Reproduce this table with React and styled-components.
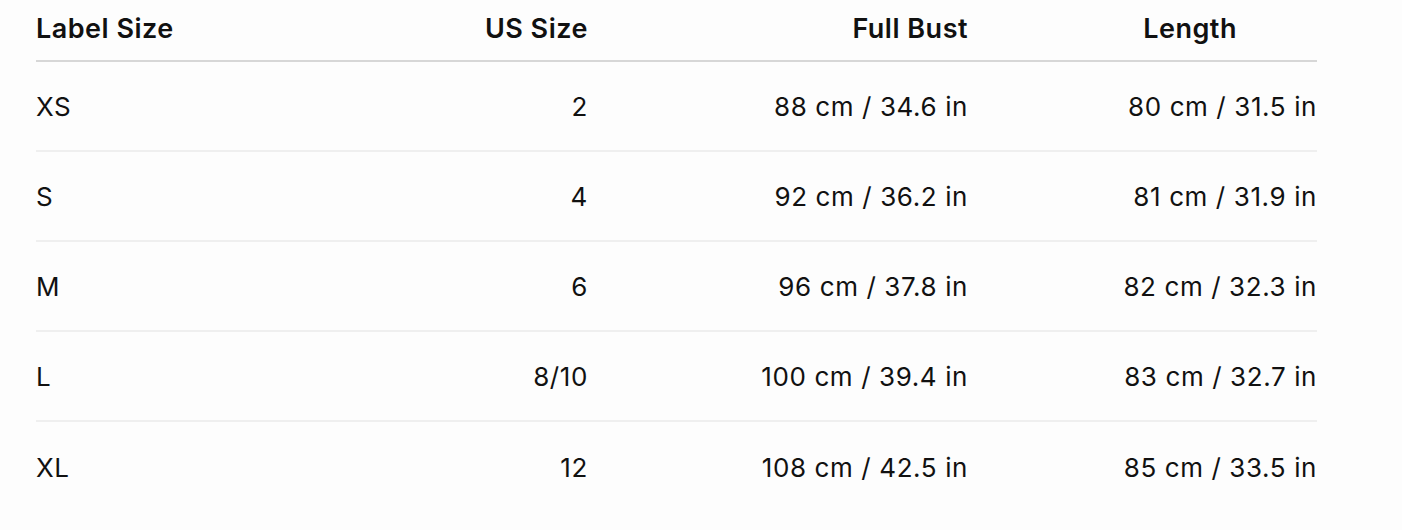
import React from 'react';
import styled, { createGlobalStyle } from 'styled-components';

const GlobalStyle = createGlobalStyle`
  html, body {
    margin: 0;
    padding: 0;
    background: #fdfdfd;
  }
  body {
    font-family: Inter, "Noto Sans", sans-serif;
    color: #111;
  }
`;

const Page = styled.div`
  padding: 0 86px 0 36px;
`;

const Table = styled.div`
  width: 1281px;
  display: grid;
  grid-template-columns: 231px 321px 380px 349px;
`;

const HeadCell = styled.div`
  height: 62px;
  padding-bottom: 4px;
  box-sizing: border-box;
  display: flex;
  align-items: center;
  justify-content: ${p => (p.$align === 'right' ? 'flex-end' : 'flex-start')};
  padding-right: ${p => p.$inset || 0}px;
  border-bottom: 2px solid #d7d7d7;
  font-size: 27px;
  font-weight: 600;
  letter-spacing: 0.5px;
  white-space: nowrap;
`;

const Cell = styled.div`
  height: 90px;
  box-sizing: border-box;
  display: flex;
  align-items: center;
  justify-content: ${p => (p.$align === 'right' ? 'flex-end' : 'flex-start')};
  border-bottom: ${p => (p.$last ? 'none' : '2px solid #efefef')};
  font-size: 26px;
  font-weight: 400;
  letter-spacing: 0.6px;
  white-space: nowrap;
`;

const rows = [
  ['XS', '2', '88 cm / 34.6 in', '80 cm / 31.5 in'],
  ['S', '4', '92 cm / 36.2 in', '81 cm / 31.9 in'],
  ['M', '6', '96 cm / 37.8 in', '82 cm / 32.3 in'],
  ['L', '8/10', '100 cm / 39.4 in', '83 cm / 32.7 in'],
  ['XL', '12', '108 cm / 42.5 in', '85 cm / 33.5 in'],
];

export default function App() {
  return (
    <Page>
      <GlobalStyle />
      <Table>
        <HeadCell>Label Size</HeadCell>
        <HeadCell $align="right">US Size</HeadCell>
        <HeadCell $align="right">Full Bust</HeadCell>
        <HeadCell $align="right" $inset={80}>Length</HeadCell>
        {rows.map((r, i) =>
          r.map((v, j) => (
            <Cell
              key={`${i}-${j}`}
              $align={j === 0 ? 'left' : 'right'}
              $last={i === rows.length - 1}
            >
              {v}
            </Cell>
          ))
        )}
      </Table>
    </Page>
  );
}
